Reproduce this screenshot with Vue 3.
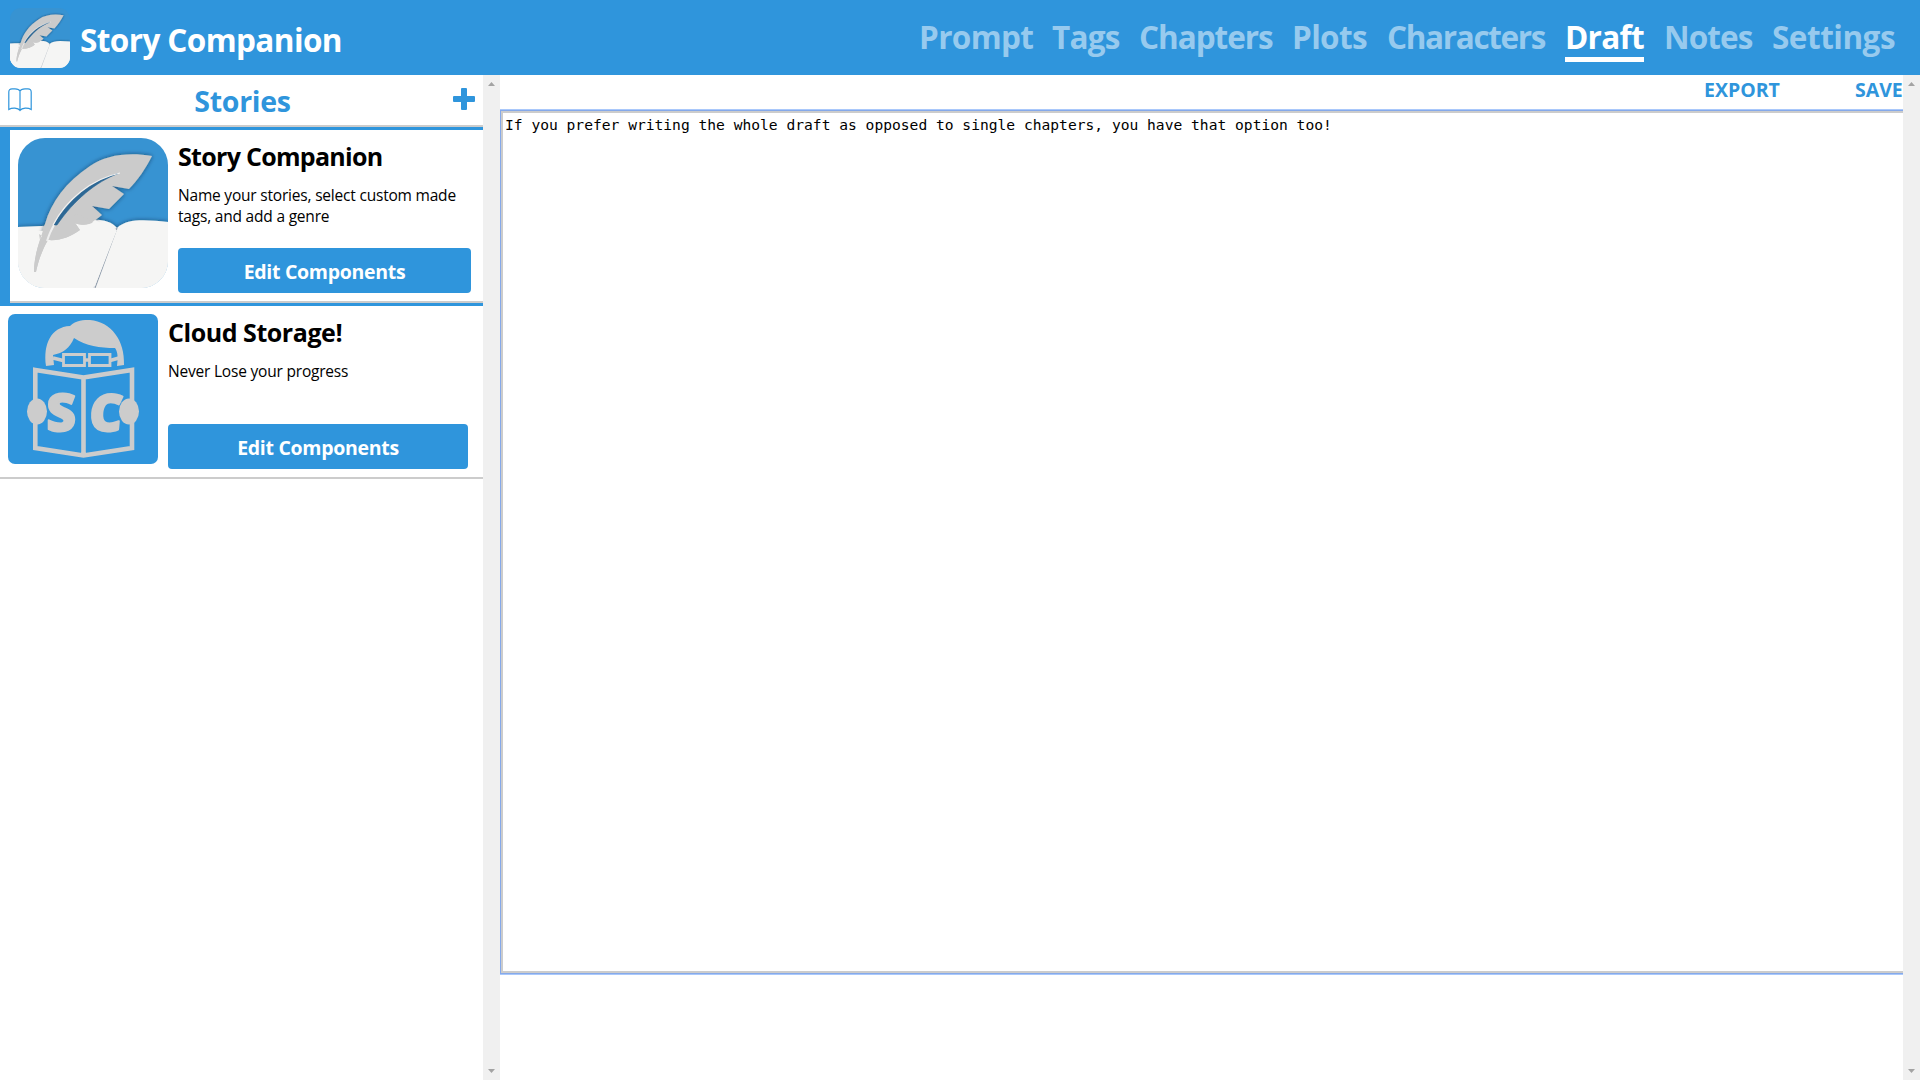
<script setup>
import { ref } from 'vue'

const navItems = [
  { label: 'Prompt', width: 113, tracking: -0.65 },
  { label: 'Tags', width: 67, tracking: -0.8 },
  { label: 'Chapters', width: 133, tracking: -1.05 },
  { label: 'Plots', width: 75, tracking: -0.65 },
  { label: 'Characters', width: 158, tracking: -1.35 },
  { label: 'Draft', width: 79, tracking: -0.7 },
  { label: 'Notes', width: 88, tracking: -0.9 },
  { label: 'Settings', width: 123, tracking: -0.5 },
]
const active = ref('Draft')
const draft = ref('If you prefer writing the whole draft as opposed to single chapters, you have that option too!')

const stories = [
  { title: 'Story Companion', text: 'Name your stories, select custom made tags, and add a genre', icon: 'feather', selected: true, tracking: -0.7 },
  { title: 'Cloud Storage!', text: 'Never Lose your progress', icon: 'reader', selected: false, tracking: -0.45 },
]
</script>

<template>
  <div class="app">
    <svg class="defs" width="0" height="0" aria-hidden="true">
      <defs>
        <filter id="glow" x="-20%" y="-20%" width="140%" height="140%">
          <feDropShadow dx="0" dy="0" stdDeviation="2.2" flood-color="#123" flood-opacity=".6" />
        </filter>
        <symbol id="feather" viewBox="0 0 150 150">
          <rect width="150" height="150" fill="#3793d2" />
          <g filter="url(#glow)">
            <path d="M0 89 C16 88 32 88 45 87 C70 80 90 79 99 90 C110 80 128 82 150 84 V150 H0Z" fill="#f5f5f4" />
          </g>
          <rect x="-2" y="93" width="154" height="60" fill="#f5f5f4" />
          <path d="M99 90 L77 150" stroke="#8e9baa" stroke-width="1.1" />
          <path d="M97.6 90 L75.8 150" stroke="#d5d8dc" stroke-width=".8" />
          <g filter="url(#glow)">
            <path d="M134 18 C110 14 88 17 72 28 C48 44 33 64 27 86 L22 102 C18 114 16 124 16 134 L18 134 C20 124 24 112 30 102 C42 103 52 99 62 92 L57 85 C63 88 72 87 75 84 L84 77 L74 68 L91 71 L106 56 L94 48 L111 51 C120 42 128 30 134 18Z" fill="#cbcbcb" />
          </g>
          <path d="M0 93 H27 L22 102 C18 114 16 124 16 134 L18 134 C20 124 24 112 30 102 C42 103 52 99 62 92 L57 85 C63 88 72 87 77 82 L99 92 L77 148 H0Z" fill="#f5f5f4" />
          <path d="M27 86 L22 102 C18 114 16 124 16 134 L18 134 C20 124 24 112 30 102 C42 103 52 99 62 92 L57 85 C63 88 72 87 75 84 L60 76Z M22 102 L21 96 L24 98Z" fill="#cbcbcb" />
          <path d="M36 87 C49 63 73 43 100 35.500 C78 44 56 62 39 87Z" fill="#2d6895" stroke="#2d6895" stroke-width=".6" />
          <path d="M35 87 C48 62 73 41 102 35" fill="none" stroke="#f2f2f2" stroke-width="1.2" />
          <path d="M36 87 C33 92 31 97 29 103" fill="none" stroke="#efefef" stroke-width="2" />
        </symbol>
        <symbol id="reader" viewBox="0 0 150 150">
          <rect width="150" height="150" fill="#2f95dc" />
          <path d="M38 52 C35 30 43 13 62 12 C68 6 76 6 82 6 C103 8 117 26 116 51 L109 52 C110 44 110 38 107 34 C92 34 78 32 66 24 C62 34 55 39 45 41 L46 51Z" fill="#cccccc" />
          <g fill="none" stroke="#ccc">
            <path d="M55.500 40.500H76.500V51.500H55.500Z M81.500 40.500H102V51.500H81.500Z" stroke-width="2.800" />
            <path d="M45 44 L55 46.500 M76 46 H82 M102 46.500 L111 44" stroke-width="3.500" />
            <path d="M27.300 56 L75.500 63.500 L124 56 V134 L75.500 141.500 L27.300 134Z M75.500 63 V141" stroke-width="4.600" />
          </g>
          <ellipse cx="29" cy="97.500" rx="10" ry="13" fill="#ccc" />
          <ellipse cx="121" cy="97.500" rx="10" ry="13" fill="#ccc" />
          <g class="initials">
            <text transform="translate(38.5 116.500)">S</text>
            <text transform="translate(80 116.500) skewX(-5)">C</text>
          </g>
        </symbol>
      </defs>
    </svg>

    <header class="topbar">
      <svg class="logo"><use href="#feather" /></svg>
      <h1 class="brand">Story Companion</h1>
      <nav class="nav">
        <a v-for="n in navItems" :key="n.label" :class="{ active: n.label === active }" :style="{ width: n.width + 'px', letterSpacing: n.tracking + 'px' }" @click="active = n.label">{{ n.label }}</a>
      </nav>
    </header>

    <div class="body">
      <aside class="sidebar">
        <div class="sidehead">
          <svg class="book" viewBox="0 0 24 24" fill="none" stroke="#2f95dc" stroke-width="1.2">
            <path d="M12 3 C11 .8 9 .8 7 .8 H4 C2 .8 .8 2 .8 4 V21.500 C4 19.500 10 19.500 12 22.500 C14 19.500 20 19.500 23.200 21.500 V4 C23.200 2 22 .8 20 .8 H17 C15 .8 13 .8 12 3 V22" />
          </svg>
          <h2>Stories</h2>
          <svg class="plus" viewBox="0 0 22 22"><path d="M9 0h4q1 0 1 1v7h7q1 0 1 1v4q0 1-1 1h-7v7q0 1-1 1H9q-1 0-1-1v-7H1q-1 0-1-1V9q0-1 1-1h7V1q0-1 1-1z" fill="#2f95dc" /></svg>
        </div>
        <article v-for="s in stories" :key="s.title" class="story" :class="{ selected: s.selected }">
          <div class="inner">
            <svg class="thumb" :class="s.icon"><use :href="'#' + s.icon" /></svg>
            <div class="info">
              <h3 :style="{ letterSpacing: s.tracking + 'px' }">{{ s.title }}</h3>
              <p>{{ s.text }}</p>
              <button>Edit Components</button>
            </div>
          </div>
        </article>
      </aside>
      <div class="scroll">
        <svg viewBox="0 0 7 4"><path d="M0 4L3.500 0L7 4Z" /></svg>
        <svg viewBox="0 0 7 4"><path d="M0 0L3.500 4L7 0Z" /></svg>
      </div>
      <main class="main">
        <div class="actions"><span class="export">EXPORT</span><span class="save">SAVE</span></div>
        <textarea v-model="draft" spellcheck="false"></textarea>
      </main>
      <div class="scroll">
        <svg viewBox="0 0 7 4"><path d="M0 4L3.500 0L7 4Z" /></svg>
        <svg viewBox="0 0 7 4"><path d="M0 0L3.500 4L7 0Z" /></svg>
      </div>
    </div>
  </div>
</template>

<style>
body { margin: 0; overflow: hidden; }
</style>

<style scoped>
* { box-sizing: border-box; }
h1, h2, h3, p { margin: 0; white-space: nowrap; }
.app { width: 1920px; height: 1080px; display: flex; flex-direction: column; background: #fff; font-family: "Open Sans", "Noto Sans", sans-serif; color: #000; }
.defs { position: absolute; }
.initials { font: 800 51px "Open Sans", sans-serif; fill: #ccc; stroke: #ccc; stroke-width: 2px; stroke-linejoin: round; }
.topbar { height: 75px; flex: none; background: #2f95dc; display: flex; padding: 8px 25px 0 10px; color: #fff; }
.logo { width: 60px; height: 60px; border-radius: 11px; flex: none; }
.brand { margin: 10px 0 0 10px; font-size: 31.500px; line-height: 44px; font-weight: 700; letter-spacing: -.6px; }
.nav { margin-left: auto; display: flex; gap: 20px; padding-top: 7px; }
.nav a { height: 47px; font-size: 31.500px; line-height: 44px; font-weight: 700; color: #97caee; white-space: nowrap; cursor: pointer; }
.nav a.active { color: #fff; border-bottom: 5px solid #fff; }
.body { flex: 1; display: flex; min-height: 0; }
.sidebar { width: 483px; }
.sidehead { height: 52px; border-bottom: 2px solid #ccc; display: flex; justify-content: space-between; padding: 13px 8px 0; }
.book { width: 24px; height: 24px; }
.sidehead h2 { color: #2f95dc; font-size: 28.500px; line-height: 40px; margin-top: -7px; letter-spacing: -.3px; }
.plus { width: 22px; height: 22px; }
.story { border-bottom: 2px solid #ccc; }
.inner { display: flex; height: 171px; padding: 8px 15px 8px 8px; }
.story.selected { border-top: 3px solid #2f95dc; border-bottom: 3px solid #2f95dc; border-left: 10px solid #2f95dc; }
.selected .inner { height: 173px; border-bottom: 2px solid #ccc; padding-right: 12px; }
.thumb { width: 150px; height: 150px; flex: none; border-radius: 7px; }
.thumb.feather { border-radius: 27px; }
.info { margin-left: 10px; flex: 1; display: flex; flex-direction: column; }
.info h3 { font-size: 25px; line-height: 34px; margin-top: 1px; }
.info p { font-size: 15.500px; line-height: 21px; margin-top: 11.500px; white-space: normal; width: 290px; letter-spacing: -.2px; }
.info button { margin-top: auto; height: 45px; border: 0; border-radius: 4px; background: #2f95dc; color: #fff; font: 700 19.500px/43px "Open Sans", sans-serif; letter-spacing: -.3px; padding: 2px 0 0; }
.scroll { width: 17px; flex: none; background: #f0f0f0; display: flex; flex-direction: column; justify-content: space-between; align-items: center; padding: 7px 0; }
.scroll svg { width: 7px; height: 4px; fill: #a3a3a3; }
.main { flex: 1; min-width: 0; overflow: hidden; display: flex; flex-direction: column; }
.actions { height: 34px; flex: none; display: flex; justify-content: flex-end; color: #2f95dc; font-size: 19.500px; font-weight: 700; line-height: 30px; }
.export { width: 76px; margin-right: 75px; }
.save { width: 48px; }
textarea { width: 1420px; height: 862px; flex: none; border: 2px solid #ccc; border-radius: 0; outline: none; box-shadow: 0 0 0 1px #85a9ea, 0 0 0 2px #a9c8fb; resize: none; margin: 2px 0 0 1px; padding: 1px 2px; font: 14.620px/22px "DejaVu Sans Mono", monospace; color: #000; }
</style>
